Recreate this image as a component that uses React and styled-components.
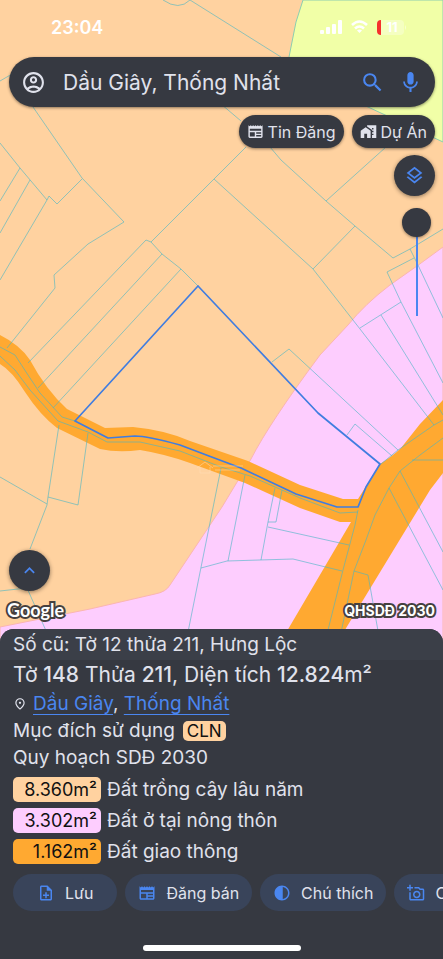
import React, { useState } from "react";
import styled, { createGlobalStyle } from "styled-components";
import {
  MdOutlineAccountCircle,
  MdSearch,
  MdMic,
  MdOutlineNewspaper,
  MdMapsHomeWork,
  MdOutlineLayers,
  MdKeyboardArrowUp,
  MdOutlinePlace,
  MdOutlineNoteAdd,
  MdContrast,
  MdOutlineAddAPhoto,
} from "react-icons/md";

const color = {
  panel: "#363941",
  strip: "#3b3f48",
  text: "#e0e2ec",
  blue: "#4a86f0",
  action: "#39445a",
  perennial: "#ffd2a0",
  rural: "#fdcdfe",
  traffic: "#ffa931",
  green: "#f1ffa7",
};

const GlobalStyle = createGlobalStyle`
  * { box-sizing: border-box; }
  body {
    margin: 0;
    overflow-x: hidden;
    font-family: Inter, "Noto Sans", sans-serif;
    color: ${color.text};
    background: ${color.panel};
  }
  button, input { font: inherit; color: inherit; }
  h1, p, ul { margin: 0; padding: 0; }
`;

const Screen = styled.main`
  min-height: 100vh;
  display: flex;
  flex-direction: column;
`;

const MapArea = styled.section`
  position: relative;
  flex: 1;
  display: flex;
  flex-direction: column;
  padding: 0 8px 14px 9px;
  background: ${color.perennial};
`;

const MapDrawing = styled.svg`
  position: absolute;
  inset: 0;
  width: 100%;
  height: 100%;
`;

const StatusBar = styled.header`
  position: relative;
  height: 57px;
  padding: 0 28px 3px 42px;
  display: flex;
  align-items: center;
  justify-content: space-between;
  color: #fff;
`;

const Clock = styled.time`
  font-size: 18px;
  font-weight: 600;
`;

const StatusIcons = styled.div`
  display: flex;
  align-items: center;
  gap: 9px;
`;

const SearchBar = styled.form`
  position: relative;
  height: 50px;
  padding: 0 6px 0 12px;
  display: flex;
  align-items: center;
  border-radius: 25px;
  background: ${color.panel};
  box-shadow: 0 1px 3px rgba(0, 0, 0, 0.45);
`;

const IconButton = styled.button`
  flex: none;
  display: grid;
  place-items: center;
  width: ${(p) => p.$width}px;
  height: 40px;
  padding: 0;
  border: 0;
  background: none;
  color: ${(p) => (p.$accent ? color.blue : color.text)};
`;

const SearchInput = styled.input`
  flex: 1;
  min-width: 0;
  margin-left: 17px;
  padding: 0;
  border: 0;
  outline: 0;
  background: none;
  font-size: 21px;
`;

const FilterRow = styled.div`
  position: relative;
  display: flex;
  justify-content: flex-end;
  gap: 8px;
  margin-top: 8px;
`;

const FilterChip = styled.button`
  height: 33px;
  padding: 0 8px;
  display: flex;
  align-items: center;
  gap: 4px;
  border: 0;
  border-radius: 17px;
  background: ${color.panel};
  box-shadow: 0 1px 3px rgba(0, 0, 0, 0.45);
  font-size: 16px;
  white-space: nowrap;
`;

const MapTools = styled.div`
  position: relative;
  display: flex;
  flex-direction: column;
  align-items: flex-end;
  gap: 12px;
  margin-top: 7px;
`;

const RoundButton = styled.button`
  width: 41px;
  height: 41px;
  display: grid;
  place-items: center;
  padding: 0;
  border: 0;
  border-radius: 50%;
  background: ${color.panel};
  box-shadow: 0 1px 4px rgba(0, 0, 0, 0.45);
  color: ${color.blue};
`;

const OpacitySlider = styled.input`
  appearance: none;
  writing-mode: vertical-lr;
  width: 29px;
  height: 108px;
  margin: 0 4px 0 0;
  background: linear-gradient(${color.blue}, ${color.blue}) center / 2px 100% no-repeat;

  &::-webkit-slider-thumb {
    appearance: none;
    width: 29px;
    height: 29px;
    border-radius: 50%;
    background: ${color.panel};
    box-shadow: 0 1px 3px rgba(0, 0, 0, 0.4);
  }
`;

const MapFooter = styled.div`
  position: relative;
  margin-top: auto;
`;

const MapLabels = styled.div`
  display: flex;
  align-items: center;
  justify-content: space-between;
  height: 38px;
  margin-left: -2px;
`;

const Outlined = styled.span`
  font-family: ${(p) => (p.$logo ? "Lato" : "Inter")}, sans-serif;
  font-size: ${(p) => (p.$logo ? 18 : 14)}px;
  font-weight: 700;
  color: #fff;
  -webkit-text-stroke: 4px #45403f;
  paint-order: stroke fill;
`;

const Sheet = styled.section`
  position: relative;
  margin-top: -14px;
  border-radius: 14px 14px 0 0;
  background: ${color.panel};
  overflow: hidden;
`;

const OldParcel = styled.p`
  padding: 0 13px;
  background: ${color.strip};
  font-size: 19px;
  line-height: 31px;
`;

const Details = styled.div`
  padding: 0 13px;
`;

const ParcelTitle = styled.h1`
  font-size: 21px;
  font-weight: 400;
  line-height: 30px;

  strong { font-weight: 500; }
`;

const Line = styled.p`
  display: flex;
  align-items: center;
  font-size: 19px;
  line-height: 27px;
`;

const PlaceLink = styled.a`
  color: ${color.blue};
  text-decoration: underline;
  text-decoration-thickness: 1px;
  text-underline-offset: 4px;
`;

const Places = styled.span`
  margin-left: 6px;
`;

const Code = styled.span`
  margin-left: 8px;
  padding: 0 4px;
  border-radius: 5px;
  background: ${color.perennial};
  color: #111;
  font-size: 17px;
  line-height: 20px;
`;

const LandList = styled.ul`
  display: grid;
  gap: 6px;
  margin-top: 6px;
  list-style: none;
`;

const LandRow = styled.li`
  display: grid;
  grid-template-columns: 88px 1fr;
  align-items: center;
  gap: 6px;
  font-size: 19px;
  line-height: 25px;
`;

const Area = styled.span`
  padding-right: 4px;
  border-radius: 5px;
  background: ${(p) => p.$fill};
  color: #111;
  font-size: 18px;
  text-align: right;
`;

const Actions = styled.nav`
  display: flex;
  gap: 8px;
  padding: 10px 0 34px 13px;
  overflow: hidden;
`;

const ActionButton = styled.button`
  flex: none;
  height: 37px;
  padding: 0 ${(p) => (p.$wide ? 24 : 13)}px;
  display: flex;
  align-items: center;
  gap: 10px;
  border: 0;
  border-radius: 19px;
  background: ${color.action};
  font-size: 16px;
  white-space: nowrap;

  svg { color: ${color.blue}; }
`;

const HomeIndicator = styled.div`
  width: 158px;
  height: 6px;
  margin: 0 auto 8px;
  border-radius: 3px;
  background: #fff;
`;

const plots = [
  "M163 0Q179 11 190 0L281 57",
  "M0 81L12 74M33 107L82 178L124 222L88 244L54 275L55 288L7 348",
  "M0 143L20 168L47 200L49 196L57 204L82 179M20 168L0 201M30 180L0 233M47 200L0 280",
  "M28 363L146 240L151 242L162 254L181 269L198 286M151 242L246 147M162 254L38 388M181 269L53 408",
  "M214 179L313 269L360 329L434 425",
  "M221 104L241 121M270 147L281 160L326 201L355 226L393 258L410 249L443 229",
  "M386 147L326 201M355 226L313 269M410 249L417 263L443 318",
  "M414 258L387 272L401 302L443 383M401 302L360 328M381 315L443 415",
  "M272 362L289 349L398 450M347 435L355 424L392 456",
  "M381 464L398 450L434 425L443 420",
  "M443 438L420 455L400 471L389 488L375 515L366 540L354 571L339 642",
  "M358 510L355 525L343 570L325 642M412 460H443M400 471L443 552M389 488L443 590M354 571L368 575L380 642",
  "M201 568L227 561L293 559L342 571M268 527L349 545M261 560L268 522H276L282 490M268 522L275 488M245 475L228 561M221 468L186 642",
  "M0 477L47 504M59 425L48 497L47 505L30 549M88 433L78 505L48 497M0 591L27 588L51 642",
  "M0 347L15 355L28 375L40 393L62 417L75 421",
  "M0 356L15 370L30 390L58 421L88 432L107 442L140 442L180 451L221 467L250 476L300 498L340 513L358 512",
];

function PlanningMap() {
  return (
    <MapDrawing viewBox="0 0 443 643" preserveAspectRatio="xMinYMin slice" aria-hidden="true">
      <path
        d="M303 0L296 22L289 57Q292 76 325 88L368 107L443 142V0Z"
        fill={color.green}
        stroke="#8dceb0"
      />
      <path
        d="M443 247L417 266L390 285Q365 304 348 325L320 355Q270 422 251 459L222 507L170 585Q166 592 155 594L90 609L0 627V643H443Z"
        fill={color.rural}
        stroke="#fbb6b0"
      />
      <path
        d="M0 335Q20 345 30 360Q46 390 67 409L105 428L133 427Q165 430 190 441L248 461L300 485L343 499H358L380 464Q394 455 401 448L420 424L443 400V473L430 490L337 643H280L351 522H340L300 508L245 483L190 463Q165 454 140 450Q118 453 100 449L57 428Q40 415 25 392Q12 371 0 364Z"
        fill={color.traffic}
      />
      <path d={plots.join("")} fill="none" stroke="#48b5c4" strokeOpacity="0.6" />
      <path
        d="M198 286L318 413L380 464L366 487L358 507H337L296 494L241 468L209 456L180 445Q147 436 135 436L108 438L75 421Z"
        fill="none"
        stroke="#407de0"
        strokeWidth="1.7"
        strokeLinejoin="round"
      />
      <path
        d="M197 468L205 462L213 468M200 467V473H210V467M213 466H243M215 470H240"
        fill="none"
        stroke="#ffe0b8"
        strokeOpacity="0.5"
      />
    </MapDrawing>
  );
}

function PhoneStatus() {
  return (
    <StatusIcons>
      <svg width="22" height="15" viewBox="0 0 22 15" fill="#fff" aria-hidden="true">
        <rect x="0" y="10" width="4" height="4" rx="1" />
        <rect x="6" y="7" width="4" height="7" rx="1" />
        <rect x="12" y="4" width="4" height="10" rx="1" />
        <rect x="18" y="0" width="4" height="14" rx="1" />
      </svg>
      <svg width="17" height="14" viewBox="0 0 17 14" fill="none" stroke="#fff" strokeWidth="2.6" aria-hidden="true">
        <path d="M1 5Q8.500 -2 16 5M4 8.500Q8.500 4.500 13 8.500" />
        <path d="M6 10.500Q8.500 8.500 11 10.500L8.500 13Z" fill="#fff" stroke="none" />
      </svg>
      <svg width="30" height="15" viewBox="0 0 30 15" aria-label="11%">
        <rect x="0" y="0" width="27" height="15" rx="4" fill="#fff" fillOpacity="0.3" />
        <path d="M4 0Q0 0 0 4V11Q0 15 4 15Z" fill="#f5302d" />
        <path d="M28 5Q30 7.500 28 10Z" fill="#fff" fillOpacity="0.5" />
        <text x="15" y="12" textAnchor="middle" fontSize="13" fontWeight="700" fill="#fff">11</text>
      </svg>
    </StatusIcons>
  );
}

const lands = [
  { area: "8.360m²", name: "Đất trồng cây lâu năm", fill: color.perennial },
  { area: "3.302m²", name: "Đất ở tại nông thôn", fill: color.rural },
  { area: "1.162m²", name: "Đất giao thông", fill: color.traffic },
];

const actions = [
  { label: "Lưu", icon: MdOutlineNoteAdd, wide: true },
  { label: "Đăng bán", icon: MdOutlineNewspaper },
  { label: "Chú thích", icon: MdContrast },
  { label: "Chụp ảnh", icon: MdOutlineAddAPhoto },
];

export default function App() {
  const [query, setQuery] = useState("Dầu Giây, Thống Nhất");
  const [opacity, setOpacity] = useState(0);

  return (
    <Screen>
      <GlobalStyle />
      <MapArea>
        <PlanningMap />
        <StatusBar>
          <Clock>23:04</Clock>
          <PhoneStatus />
        </StatusBar>
        <SearchBar onSubmit={(e) => e.preventDefault()}>
          <IconButton type="button" $width={25} aria-label="Tài khoản">
            <MdOutlineAccountCircle size={25} />
          </IconButton>
          <SearchInput
            aria-label="Tìm kiếm"
            value={query}
            onChange={(e) => setQuery(e.target.value)}
          />
          <IconButton type="submit" $width={38} $accent aria-label="Tìm">
            <MdSearch size={25} />
          </IconButton>
          <IconButton type="button" $width={38} $accent aria-label="Giọng nói">
            <MdMic size={25} />
          </IconButton>
        </SearchBar>
        <FilterRow>
          <FilterChip type="button">
            <MdOutlineNewspaper size={17} />
            Tin Đăng
          </FilterChip>
          <FilterChip type="button">
            <MdMapsHomeWork size={17} />
            Dự Án
          </FilterChip>
        </FilterRow>
        <MapTools>
          <RoundButton type="button" aria-label="Lớp bản đồ">
            <MdOutlineLayers size={21} />
          </RoundButton>
          <OpacitySlider
            type="range"
            min="0"
            max="100"
            aria-label="Độ mờ"
            value={opacity}
            onChange={(e) => setOpacity(Number(e.target.value))}
          />
        </MapTools>
        <MapFooter>
          <RoundButton type="button" aria-label="Mở rộng">
            <MdKeyboardArrowUp size={21} />
          </RoundButton>
          <MapLabels>
            <Outlined $logo>Google</Outlined>
            <Outlined>QHSDĐ 2030</Outlined>
          </MapLabels>
        </MapFooter>
      </MapArea>
      <Sheet>
        <OldParcel>Số cũ: Tờ 12 thửa 211, Hưng Lộc</OldParcel>
        <Details>
          <ParcelTitle>
            Tờ <strong>148</strong> Thửa <strong>211</strong>, Diện tích <strong>12.824</strong>m²
          </ParcelTitle>
          <Line>
            <MdOutlinePlace size={14} />
            <Places>
              <PlaceLink href="#dau-giay">Dầu Giây</PlaceLink>,{" "}
              <PlaceLink href="#thong-nhat">Thống Nhất</PlaceLink>
            </Places>
          </Line>
          <Line>
            Mục đích sử dụng <Code>CLN</Code>
          </Line>
          <Line>Quy hoạch SDĐ 2030</Line>
          <LandList>
            {lands.map((land) => (
              <LandRow key={land.name}>
                <Area $fill={land.fill}>{land.area}</Area>
                {land.name}
              </LandRow>
            ))}
          </LandList>
        </Details>
        <Actions>
          {actions.map(({ label, icon: Icon, wide }) => (
            <ActionButton key={label} type="button" $wide={wide}>
              <Icon size={18} />
              {label}
            </ActionButton>
          ))}
        </Actions>
        <HomeIndicator />
      </Sheet>
    </Screen>
  );
}
